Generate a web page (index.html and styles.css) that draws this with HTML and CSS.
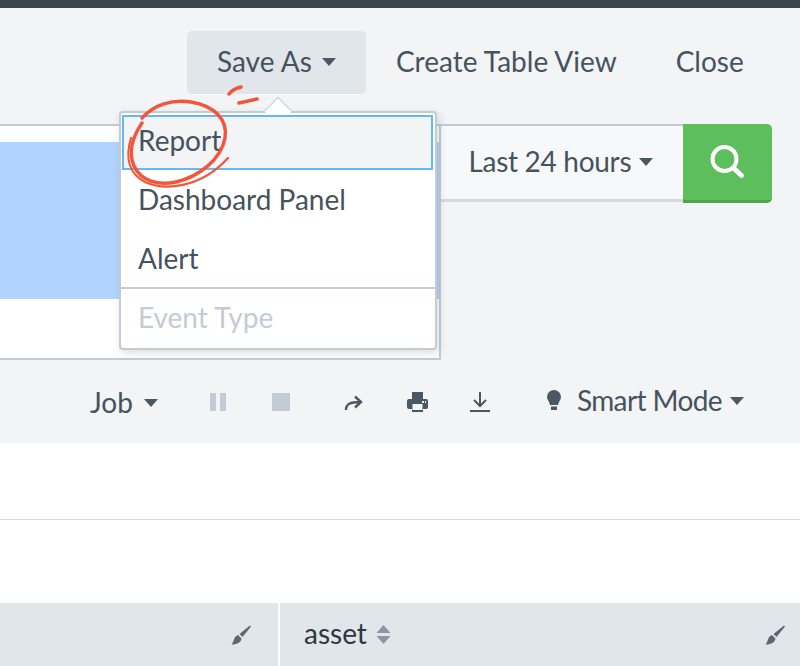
FILE: index.html
```html
<!DOCTYPE html>
<html lang="en">
<head>
<meta charset="utf-8">
<title>Save As</title>
<link rel="stylesheet" href="styles.css">
</head>
<body>
<div class="page">
  <div class="topbar"></div>
  <div class="workspace">
    <div class="actions">
      <div class="action action-active">Save As<span class="caret"></span></div>
      <div class="action">Create Table View</div>
      <div class="action action-close">Close</div>
    </div>
    <div class="search-row">
      <div class="search-box"><div class="selection"></div></div>
      <div class="time-picker">Last 24 hours<span class="caret"></span></div>
      <div class="search-btn">
        <svg width="38" height="38" viewBox="0 0 38 38"><circle cx="16.5" cy="16" r="12" fill="none" stroke="#fff" stroke-width="4"/><path d="M25.5 25l8 7.5" stroke="#fff" stroke-width="5" stroke-linecap="round"/></svg>
      </div>
    </div>
    <div class="job-row">
      <div class="job job-menu">Job<span class="caret"></span></div>
      <svg class="i-pause" width="16" height="18" viewBox="0 0 16 18"><path d="M0 0h6v18H0zM10 0h6v18h-6z" fill="#c3cbd4"/></svg>
      <svg class="i-stop" width="18" height="18" viewBox="0 0 18 18"><path d="M0 0h18v18H0z" fill="#c3cbd4"/></svg>
      <svg class="i-share" width="19" height="16" viewBox="0 0 19 16"><path d="M2 15c0-6 4-8 14-8M11 1.500l6 5.500-6 5.500" fill="none" stroke="#4b5763" stroke-width="2.400"/></svg>
      <svg class="i-print" width="21" height="20" viewBox="0 0 21 20"><path d="M5 0h11v7h3a2 2 0 0 1 2 2v6a2 2 0 0 1-2 2h-3v3H5v-3H2a2 2 0 0 1-2-2V9a2 2 0 0 1 2-2h3z" fill="#4b5763"/><path d="M5.500 12h10v6h-10z" fill="#f2f4f5"/><path d="M15 9h2v2h-2zM18 9h1v2h-1z" fill="#f2f4f5"/></svg>
      <svg class="i-download" width="20" height="20" viewBox="0 0 20 20"><path d="M10 0v14M4 8l6 6 6-6M0 19h20" fill="none" stroke="#4b5763" stroke-width="2"/></svg>
      <svg class="i-bulb" width="14" height="20" viewBox="0 0 14 20"><path d="M7 0a7 7 0 0 1 7 7c0 3-2.500 4.500-3 8H3C2.500 11.500 0 10 0 7a7 7 0 0 1 7-7zM4 16.500h6V20H4z" fill="#4b5763"/></svg>
      <div class="job job-mode">Smart Mode<span class="caret"></span></div>
    </div>
    <div class="results">
      <div class="results-line"></div>
    </div>
    <div class="table-head">
      <div class="th th-first">
        <svg class="brush" width="20" height="20" viewBox="0 0 20 20"><path d="M19 0.500l1 1-8.500 10.500-3-3zM7 10l3.500 3.500C10 17 7 19.500 0.500 19.500 3 17 2.500 11.500 7 10z" fill="#5c6773"/></svg>
      </div>
      <div class="th th-second">
        <span class="th-label">asset</span>
        <svg class="sort" width="15" height="19" viewBox="0 0 15 19"><path d="M7.500 0l7 8H0.500zM0.500 11h14l-7 8z" fill="#8a96a3"/></svg>
        <svg class="brush brush-end" width="20" height="20" viewBox="0 0 20 20"><path d="M19 0.500l1 1-8.500 10.500-3-3zM7 10l3.500 3.500C10 17 7 19.500 0.500 19.500 3 17 2.500 11.500 7 10z" fill="#5c6773"/></svg>
      </div>
    </div>
  </div>

  <div class="menu">
    <div class="menu-arrow"></div>
    <div class="menu-item menu-item-focus">Report</div>
    <div class="menu-item">Dashboard Panel</div>
    <div class="menu-item menu-item-last">Alert</div>
    <div class="menu-item menu-item-disabled">Event Type</div>
  </div>

  <svg class="scribble" width="120" height="100" viewBox="0 0 120 100">
    <path d="M17 27C8 40 3 56 9 70c7 15 24 20 42 16 22-5 45-22 49-44C103 24 90 10 66 6 48 3 30 8 17 22" fill="none" stroke="#f4553a" stroke-width="3.500" stroke-linecap="round"/>
    <path d="M6 42C0 62 4 78 20 86c20 9 56 6 83-24" fill="none" stroke="#f4553a" stroke-width="2.200" stroke-linecap="round"/>
    <path d="M104 -2c3-4 8-6 12-7" fill="none" stroke="#f4553a" stroke-width="3.500" stroke-linecap="round"/>
    <path d="M114 7l18-4" fill="none" stroke="#f4553a" stroke-width="3.500" stroke-linecap="round"/>
  </svg>
</div>
</body>
</html>
```
FILE: styles.css
```css
* { box-sizing: border-box; }
html, body { margin: 0; padding: 0; }
body { font-family: "Lato", "Open Sans", sans-serif; color: #3c444d; background: #fff; }
.page { position: relative; width: 800px; height: 666px; overflow: hidden; }
.topbar { height: 8px; background: #3c444d; }
.workspace { display: flex; flex-direction: column; height: 658px; }
.actions { display: flex; background: #f2f4f5; height: 92px; padding: 23px 0 0 187px; align-items: flex-start; font-size: 28px; color: #46525e; }
.action { height: 63px; line-height: 61px; margin-left: 30px; white-space: nowrap; }
.action-active { margin-left: 0; width: 179px; padding-left: 30px; background: #e1e6ea; border-radius: 5px; }
.action-active .caret { margin-left: 10px; }
.action-close { margin-left: 59px; }
.caret { display: inline-block; width: 0; height: 0; margin-left: 8px; vertical-align: 6px; border-style: solid; border-width: 8px 7.500px 0; border-color: #4b5763 transparent transparent; }
.search-row { display: flex; align-items: flex-start; background: #f2f4f5; box-sizing: content-box; height: 236px; padding-top: 24px; }
.search-box { width: 441px; height: 236px; background: #fff; border: 2px solid #c3cbd4; border-left: 0; padding-top: 16px; }
.selection { height: 157px; background: #b1d3ff; }
.time-picker { width: 241.500px; height: 78px; background: #f7f8fa; border-top: 2px solid #c3cbd4; border-bottom: 3px solid #d5d9dd; padding-left: 27.500px; line-height: 71px; font-size: 28px; letter-spacing: -0.300px; color: #46525e; white-space: nowrap; }
.search-btn { width: 89.500px; height: 79px; background: #5cbf5c; border-bottom: 3px solid #4aa74a; border-radius: 0 5px 5px 0; display: flex; align-items: center; justify-content: center; }
.job-row { display: flex; align-items: center; height: 83px; padding-left: 90px; background: #f2f4f5; font-size: 28px; color: #46525e; }
.job { white-space: nowrap; }
.job-menu .caret { margin-left: 11px; }
.job-mode { padding-bottom: 4px; letter-spacing: -0.600px; }
.i-pause { margin-left: 52px; }
.i-stop { margin-left: 46px; }
.i-share { margin-left: 54px; margin-top: 3px; }
.i-print { margin-left: 44px; }
.i-download { margin-left: 42px; }
.i-bulb { margin-left: 57px; margin-right: 16px; margin-bottom: 3px; }
.results { height: 160px; background: #fff; padding-top: 76px; }
.results-line { height: 1px; background: #d5d9dd; }
.table-head { display: flex; gap: 2px; flex: 1; }
.th { display: flex; align-items: center; height: 63px; background: #e1e6ea; }
.th-first { width: 278px; justify-content: flex-end; padding-right: 27px; }
.th-second { flex: 1; padding: 0 15px 0 24px; }
.th-label { font-size: 28px; padding-bottom: 4px; color: #2e3640; }
.sort { margin-left: 9px; }
.brush-end { margin-left: auto; }
.menu { position: absolute; left: 119px; top: 111px; width: 318px; height: 239px; background: #fff; border: 2px solid #c3cbd4; border-radius: 4px; box-shadow: 2px 3px 8px rgba(60, 68, 77, 0.18); font-size: 28px; color: #46525e; }
.menu-arrow { position: absolute; left: 147px; top: -12px; width: 20px; height: 20px; background: #fff; border-left: 1px solid #c3cbd4; border-top: 1px solid #c3cbd4; transform: rotate(45deg); }
.menu-item { position: relative; height: 59px; line-height: 58px; padding-left: 17px; }
.menu-item-focus { height: 55px; line-height: 47px; margin: 2px 2px 0 1px; padding-left: 14px; background: #f2f4f5; border: 2px solid #63b9f5; }
.menu-item-last { border-bottom: 2px solid #c3cbd4; height: 60px; }
.menu-item-disabled { color: #c3cbd4; line-height: 56px; }
.scribble { position: absolute; left: 125px; top: 96px; overflow: visible; }
```
